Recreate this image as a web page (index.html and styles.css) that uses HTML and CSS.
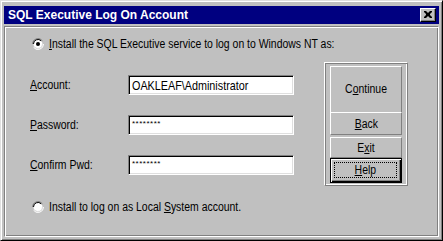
FILE: index.html
```html
<!DOCTYPE html>
<html>
<head>
<meta charset="utf-8">
<link rel="stylesheet" href="styles.css">
</head>
<body>
<div class="window">
  <div class="titlebar">
    <span class="title">SQL Executive Log On Account</span>
    <span class="close"><svg width="8" height="7" viewBox="0 0 8 7"><path d="M0 0h2l2 2 2-2h2v1l-2 2v1l2 2v1h-2l-2-2-2 2h-2v-1l2-2v-1l-2-2z" fill="#000"/></svg></span>
  </div>
  <div class="panel">
    <div class="option opt1">
      <svg class="radio" width="12" height="12" viewBox="0 0 12 12">
        <path d="M11.5 6A5.5 5.5 0 0 1 1.6 9.3" stroke="#fff" fill="none"/>
        <path d="M0.5 6A5.5 5.5 0 0 1 10.4 2.7" stroke="#808080" fill="none"/>
        <circle cx="6" cy="6" r="4.5" fill="#fff"/>
        <path d="M1.5 6A4.5 4.5 0 0 1 9.2 2.8" stroke="#000" fill="none"/>
        <path d="M10.5 6A4.5 4.5 0 0 1 2.8 9.2" stroke="#dfdfdf" fill="none"/>
        <circle cx="6" cy="6" r="2" fill="#000"/>
      </svg>
      <span class="cn"><u>I</u>nstall the SQL Executive service to log on to Windows NT as:</span>
    </div>
    <div class="middle">
      <div class="form">
        <div class="row"><label><span class="cn"><u>A</u>ccount:</span></label><div class="field"><span class="cn fcn">OAKLEAF\Administrator</span></div></div>
        <div class="row"><label><span class="cn"><u>P</u>assword:</span></label><div class="field pw">********</div></div>
        <div class="row"><label><span class="cn"><u>C</u>onfirm Pwd:</span></label><div class="field pw">********</div></div>
      </div>
      <div class="buttons">
        <div class="btn big"><span class="cn mid">C<u>o</u>ntinue</span></div>
        <div class="btn back"><span class="cn mid"><u>B</u>ack</span></div>
        <div class="btn exit"><span class="cn mid">E<u>x</u>it</span></div>
        <div class="btn default"><span class="focus"><span class="cn mid"><u>H</u>elp</span></span></div>
      </div>
    </div>
    <div class="option opt2">
      <svg class="radio" width="12" height="12" viewBox="0 0 12 12">
        <path d="M11.5 6A5.5 5.5 0 0 1 1.6 9.3" stroke="#fff" fill="none"/>
        <path d="M0.5 6A5.5 5.5 0 0 1 10.4 2.7" stroke="#808080" fill="none"/>
        <circle cx="6" cy="6" r="4.5" fill="#fff"/>
        <path d="M1.5 6A4.5 4.5 0 0 1 9.2 2.8" stroke="#000" fill="none"/>
        <path d="M10.5 6A4.5 4.5 0 0 1 2.8 9.2" stroke="#dfdfdf" fill="none"/>
      </svg>
      <span class="cn">Install to log on as Local <u>S</u>ystem account.</span>
    </div>
  </div>
</div>
</body>
</html>
```
FILE: styles.css
```css
* { box-sizing: border-box; }
html, body { margin: 0; padding: 0; }
body {
  width: 443px;
  height: 241px;
  background: #c0c0c0;
  font-family: "Liberation Sans", Arial, sans-serif;
  font-size: 12px;
  color: #000;
  overflow: hidden;
}
.cn {
  display: inline-block;
  white-space: nowrap;
  transform: scaleX(0.87);
  transform-origin: left center;
}
.cn.mid { transform-origin: center center; }
.cn.fcn { transform: scaleX(0.83); }
.window {
  width: 443px;
  height: 241px;
  background: #c0c0c0;
  border-top: 1px solid #dfdfdf;
  border-left: 1px solid #dfdfdf;
  border-right: 1px solid #000;
  border-bottom: 1px solid #000;
  box-shadow: inset 1px 1px 0 #fff, inset -1px -1px 0 #808080;
  padding: 5px 3px 3px 3px;
  display: flex;
  flex-direction: column;
}
.titlebar {
  height: 18px;
  background: #000080;
  display: flex;
  align-items: center;
  justify-content: space-between;
  padding: 0 3px 0 4px;
  margin-bottom: 2px;
}
.title {
  color: #fff;
  font-weight: bold;
  font-size: 12px;
}
.close {
  width: 16px;
  height: 14px;
  background: #c0c0c0;
  border-top: 1px solid #fff;
  border-left: 1px solid #fff;
  border-right: 1px solid #000;
  border-bottom: 1px solid #000;
  box-shadow: inset -1px -1px 0 #808080;
  display: flex;
  align-items: center;
  justify-content: center;
  padding-bottom: 1px;
}
.close svg { display: block; }
.panel {
  flex: 1;
  border-top: 1px solid #808080;
  border-left: 1px solid #808080;
  border-right: 1px solid #fff;
  border-bottom: 1px solid #fff;
  box-shadow: inset 1px 1px 0 #fff, inset -1px -1px 0 #808080;
  padding: 10px 0 0 27px;
  display: flex;
  flex-direction: column;
}
.option {
  display: flex;
  align-items: center;
  height: 14px;
}
.radio { display: block; margin-right: 5px; flex: none; }
.middle {
  display: flex;
  margin-top: 11px;
  margin-left: -2px;
}
.form {
  display: flex;
  flex-direction: column;
  gap: 20px;
  padding-top: 13px;
}
.row {
  display: flex;
  align-items: center;
  height: 20px;
}
label {
  width: 98px;
}
.field {
  width: 166px;
  height: 20px;
  background: #fff;
  border-top: 1px solid #808080;
  border-left: 1px solid #808080;
  border-right: 1px solid #fff;
  border-bottom: 1px solid #fff;
  box-shadow: inset 1px 1px 0 #000, inset -1px -1px 0 #dfdfdf;
  padding: 2px 3px 0 3px;
  line-height: 16px;
  font-size: 13px;
  white-space: nowrap;
  overflow: hidden;
}
.field.pw {
  font-size: 8px;
  line-height: 12px;
  letter-spacing: 0.5px;
}
.buttons {
  margin-left: 30px;
  width: 84px;
  height: 124px;
  border-top: 1px solid #fff;
  border-left: 1px solid #fff;
  border-right: 1px solid #808080;
  border-bottom: 1px solid #808080;
  box-shadow: inset 1px 1px 0 #808080, inset -1px -1px 0 #fff;
  padding: 3px 5px 2px 5px;
  display: flex;
  flex-direction: column;
}
.btn {
  height: 22px;
  display: flex;
  align-items: center;
  justify-content: center;
  border-top: 1px solid #fff;
  border-left: 1px solid #fff;
  border-right: 1px solid #000;
  border-bottom: 1px solid #000;
  box-shadow: inset -1px -1px 0 #808080;
}
.btn.big {
  height: 47px;
  border-bottom: none;
  box-shadow: none;
  border-right-color: #808080;
}
.btn.back {
  height: 24px;
  border-right-color: #808080;
  border-bottom-color: #808080;
  box-shadow: none;
}
.btn.exit {
  margin-top: 2px;
  height: 21px;
  border-right-color: #808080;
  border-bottom-color: #808080;
  box-shadow: none;
}
.btn.default {
  height: 25px;
  border: 1px solid #000;
  box-shadow: inset 1px 1px 0 #fff, inset -1px -1px 0 #000, inset -2px -2px 0 #808080;
  padding: 3px 4px 4px 3px;
}
.focus {
  flex: 1;
  height: 100%;
  border: 1px dotted #000;
  display: flex;
  align-items: center;
  justify-content: center;
}
.opt2 { margin-top: 14px; }
```
